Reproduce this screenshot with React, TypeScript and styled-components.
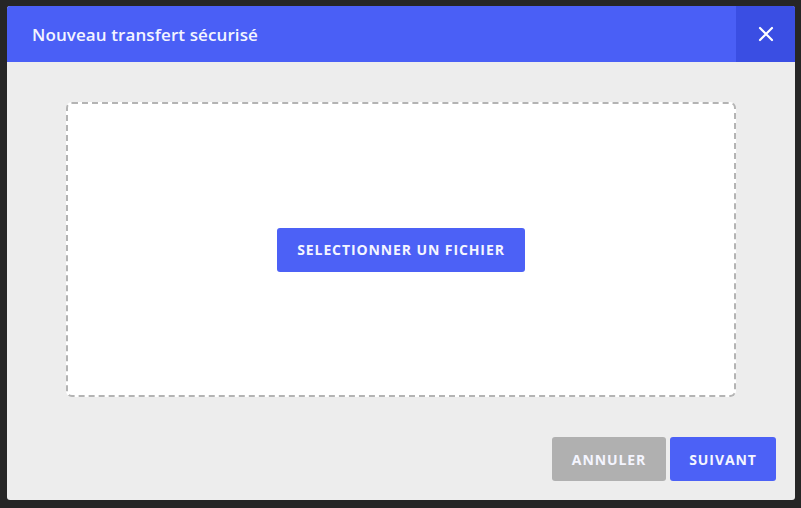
import React from "react";
import styled, { createGlobalStyle } from "styled-components";

const Global = createGlobalStyle`
  html, body { margin: 0; padding: 0; background: #262626; }
  body { font-family: "Open Sans", "Noto Sans", sans-serif; }
  * { box-sizing: border-box; }
`;

const Screen = styled.div`
  width: 801px;
  height: 508px;
  padding: 6px 6px 8px 7px;
  background: #262626;
`;

const Dialog = styled.div`
  width: 788px;
  height: 494px;
  background: #ededed;
  border-radius: 3px;
  overflow: hidden;
  display: flex;
  flex-direction: column;
`;

const Header = styled.div`
  height: 56px;
  background: #4a5ff6;
  display: flex;
  align-items: center;
  justify-content: space-between;
`;

const Title = styled.h1`
  margin: 0 0 0 25px;
  font-size: 17px;
  font-weight: 600;
  color: #f3f4ff;
  letter-spacing: 0.1px;
`;

const Close = styled.button`
  width: 59px;
  height: 56px;
  border: none;
  background: #3a4ee3;
  display: flex;
  align-items: center;
  justify-content: center;
  padding: 0;
  cursor: pointer;
`;

const Body = styled.div`
  flex: 1;
  display: flex;
  flex-direction: column;
  padding: 40px 19px 19px 59px;
`;

const Drop = styled.div`
  width: 670px;
  height: 295px;
  background: #fff;
  border: 2px dashed #b4b4b4;
  border-radius: 6px;
  display: flex;
  align-items: center;
  justify-content: center;
`;

const Btn = styled.button<{ $grey?: boolean; $w: number }>`
  width: ${(p) => p.$w}px;
  height: 44px;
  border: none;
  border-radius: 3px;
  background: ${(p) => (p.$grey ? "#b0b0b0" : "#4c61f6")};
  color: #f4f5ff;
  font-family: "Open Sans", sans-serif;
  font-weight: 700;
  font-size: 14px;
  letter-spacing: 0.9px;
  padding: 0;
  cursor: pointer;
`;

const Footer = styled.div`
  margin-top: 40px;
  display: flex;
  justify-content: flex-end;
  gap: 4px;
`;

export default function App() {
  return (
    <>
      <Global />
      <Screen>
        <Dialog>
          <Header>
            <Title>Nouveau transfert sécurisé</Title>
            <Close aria-label="close">
              <svg width="16" height="16" viewBox="0 0 16 16">
                <path d="M2 2L14 14M14 2L2 14" stroke="#fff" strokeWidth="2.2" strokeLinecap="round" />
              </svg>
            </Close>
          </Header>
          <Body>
            <Drop>
              <Btn $w={248}>SELECTIONNER UN FICHIER</Btn>
            </Drop>
            <Footer>
              <Btn $grey $w={114}>ANNULER</Btn>
              <Btn $w={106}>SUIVANT</Btn>
            </Footer>
          </Body>
        </Dialog>
      </Screen>
    </>
  );
}
